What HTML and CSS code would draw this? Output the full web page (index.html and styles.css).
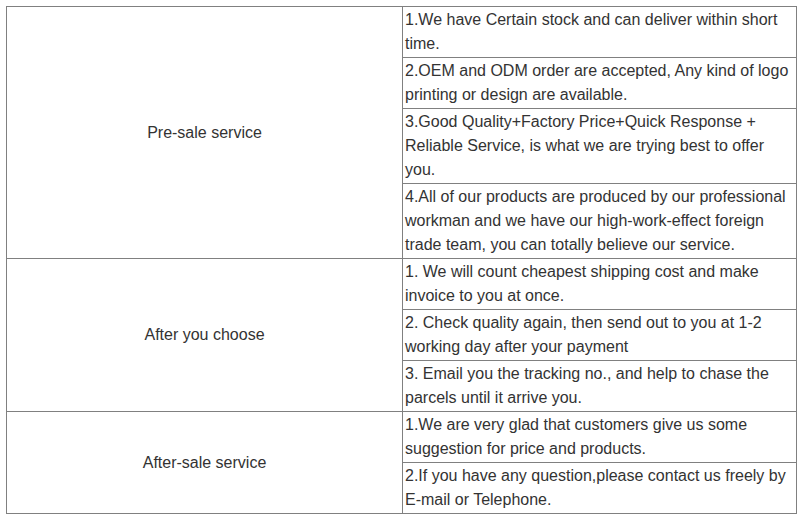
FILE: index.html
```html
<!DOCTYPE html>
<html>
<head>
<meta charset="utf-8">
<link rel="stylesheet" href="styles.css">
</head>
<body>
<table class="svc">
  <tr>
    <td class="label" rowspan="4">Pre-sale service</td>
    <td class="item">1.We have Certain stock and can deliver within short time.</td>
  </tr>
  <tr><td class="item">2.OEM and ODM order are accepted, Any kind of logo printing or design are available.</td></tr>
  <tr><td class="item">3.Good Quality+Factory Price+Quick Response + Reliable Service, is what we are trying best to offer you.</td></tr>
  <tr><td class="item">4.All of our products are produced by our professional workman and we have our high-work-effect foreign trade team, you can totally believe our service.</td></tr>
  <tr>
    <td class="label" rowspan="3">After you choose</td>
    <td class="item">1. We will count cheapest shipping cost and make invoice to you at once.</td>
  </tr>
  <tr><td class="item">2. Check quality again, then send out to you at 1-2 working day after your payment</td></tr>
  <tr><td class="item">3. Email you the tracking no., and help to chase the parcels until it arrive you.</td></tr>
  <tr>
    <td class="label" rowspan="2">After-sale service</td>
    <td class="item">1.We are very glad that customers give us some suggestion for price and products.</td>
  </tr>
  <tr><td class="item">2.If you have any question,please contact us freely by E-mail or Telephone.</td></tr>
</table>
</body>
</html>
```

FILE: styles.css
```css
body {
  margin: 6px;
  background: #fff;
  font-family: "Liberation Sans", Arial, sans-serif;
  font-size: 16px;
  color: #333;
}
.svc {
  border-collapse: collapse;
  width: 791px;
  table-layout: fixed;
}
.svc td {
  border: 1px solid #808080;
  padding: 1px 2px;
  line-height: 24px;
}
.label {
  width: 391px;
  text-align: center;
  vertical-align: middle;
}
.item {
  vertical-align: top;
}
```
